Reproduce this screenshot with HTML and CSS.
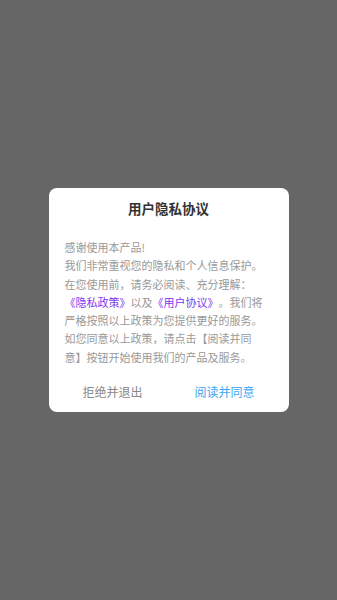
FILE: index.html
```html
<!DOCTYPE html>
<html lang="zh-CN">
<head>
    <meta charset="UTF-8">
    <meta name="viewport" content="width=device-width, initial-scale=1.0">
    <title>用户隐私协议</title>
    <link rel="stylesheet" href="styles.css">
</head>
<body>

<div class="overlay">
    <div class="dialog">
        <h2 class="dialog-title">用户隐私协议</h2>
        <p class="dialog-text">感谢使用本产品!<br>我们非常重视您的隐私和个人信息保护。在您使用前，请务必阅读、充分理解：<span class="link">《隐私政策》</span>以及<span class="link">《用户协议》</span>。我们将严格按照以上政策为您提供更好的服务。如您同意以上政策，请点击【阅读并同意】按钮开始使用我们的产品及服务。</p>
        <div class="dialog-actions">
            <button class="btn btn-cancel">拒绝并退出</button>
            <button class="btn btn-ok">阅读并同意</button>
        </div>
    </div>
</div>

</body>
</html>
```

FILE: styles.css
```css
body {
    margin: 0;
    padding: 0;
    font-family: "Noto Sans CJK SC", "Noto Sans", sans-serif;
}
.overlay {
    width: 100%;
    height: 100vh;
    background: #666666;
    display: flex;
    justify-content: center;
    align-items: center;
}
.dialog {
    width: 240px;
    background: #fff;
    border-radius: 8px;
    padding: 10px 0 1px;
    box-sizing: border-box;
}
.dialog-title {
    margin: 0;
    font-size: 13.5px;
    line-height: 20px;
    font-weight: bold;
    color: #333;
    text-align: center;
}
.dialog-text {
    margin: 20px 0 5px;
    padding: 0 16px;
    font-size: 11px;
    line-height: 18.3px;
    color: #999;
    text-spacing-trim: space-all;
    font-feature-settings: "halt" 0, "palt" 0;
}
.link {
    color: #8037f0;
}
.dialog-actions {
    display: flex;
    padding: 0 8px;
}
.btn {
    flex: 1;
    height: 40px;
    border: none;
    background: none;
    font-family: inherit;
    font-size: 12px;
    padding: 0;
    cursor: pointer;
}
.btn-cancel {
    color: #888;
}
.btn-ok {
    color: #3ea8f2;
}
```
